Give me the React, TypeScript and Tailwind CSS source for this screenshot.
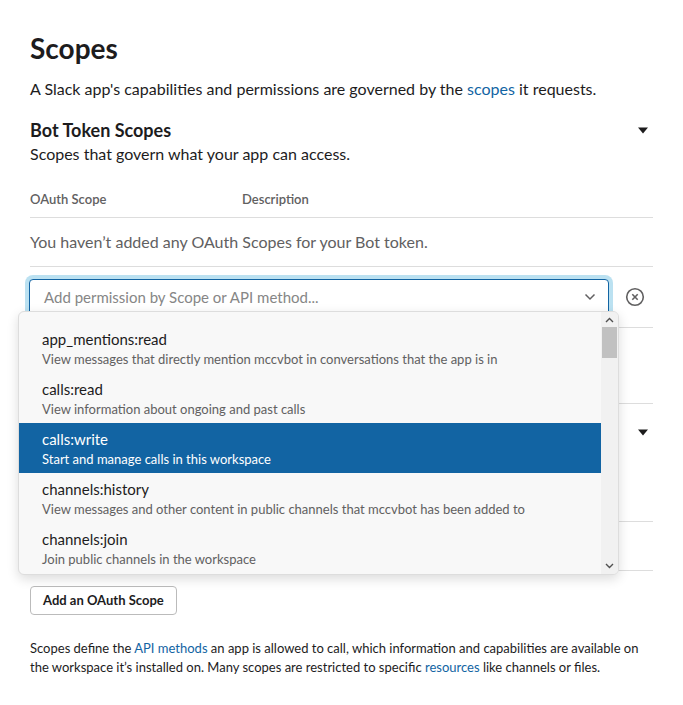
import React from "react";

const OPTIONS = [
  { name: "app_mentions:read", desc: "View messages that directly mention mccvbot in conversations that the app is in" },
  { name: "calls:read", desc: "View information about ongoing and past calls" },
  { name: "calls:write", desc: "Start and manage calls in this workspace", active: true },
  { name: "channels:history", desc: "View messages and other content in public channels that mccvbot has been added to" },
  { name: "channels:join", desc: "Join public channels in the workspace" },
];

function Caret() {
  return (
    <svg width="10" height="7" viewBox="0 0 10 7" className="mr-[5px]">
      <path d="M0 0.5h10L5 6.5z" fill="#1d1c1d" />
    </svg>
  );
}

function TableHead() {
  return (
    <div className="flex border-b border-[#dddddd] pb-[9px] text-[13px] leading-[18px] font-semibold text-[#616061]">
      <div className="w-[212px]">OAuth Scope</div>
      <div>Description</div>
    </div>
  );
}

function AddButton() {
  return (
    <button className="h-[29px] px-[12px] rounded-[4px] border border-[#bbbbbb] bg-white text-[13px] font-bold text-[#1d1c1d]">
      Add an OAuth Scope
    </button>
  );
}

function Dropdown() {
  return (
    <div className="absolute left-[-11px] top-[32px] z-10 w-[601px] h-[264px] rounded-[6px] border border-[#dddddd] bg-[#f8f8f8] shadow-[0_4px_12px_rgba(0,0,0,0.14)] flex overflow-hidden">
      <div className="flex-1 pt-[11px]">
        {OPTIONS.map((o) => (
          <div
            key={o.name}
            className={`h-[50px] pl-[23px] pt-[5px] ${o.active ? "bg-[#1264a3] text-white" : "text-[#1d1c1d]"}`}
          >
            <div className="text-[15px] leading-[22px]">{o.name}</div>
            <div className={`text-[13px] leading-[18px] ${o.active ? "text-white" : "text-[#616061]"}`}>{o.desc}</div>
          </div>
        ))}
      </div>
      <div className="w-[17px] bg-[#f1f1f1] flex flex-col items-center">
        <svg width="9" height="6" viewBox="0 0 9 6" className="mt-[5px]">
          <path d="M1 5L4.5 1.5L8 5" stroke="#505050" strokeWidth="1.4" fill="none" />
        </svg>
        <div className="mt-[4px] w-[15px] h-[31px] bg-[#c1c1c1]" />
        <div className="flex-1" />
        <svg width="9" height="6" viewBox="0 0 9 6" className="mb-[5px]">
          <path d="M1 1L4.5 4.5L8 1" stroke="#505050" strokeWidth="1.4" fill="none" />
        </svg>
      </div>
    </div>
  );
}

export default function App() {
  return (
    <main className="min-h-screen bg-white font-['Lato','Noto_Sans',sans-serif] text-[#1d1c1d]">
      <div className="px-[30px] pt-[28px] pb-[30px]">
        <h1 className="text-[28px] leading-[40px] font-bold">Scopes</h1>
        <p className="mt-[10px] text-[16px] leading-[22px]">
          A Slack app's capabilities and permissions are governed by the{" "}
          <a className="text-[#1264a3]">scopes</a> it requests.
        </p>

        {/* Bot token section */}
        <section className="mt-[18px] border-b border-[#dddddd] pb-[30px]">
          <div className="flex items-center justify-between">
            <h2 className="text-[18px] leading-[24px] font-bold">Bot Token Scopes</h2>
            <Caret />
          </div>
          <p className="mt-[1px] text-[16px] leading-[22px]">Scopes that govern what your app can access.</p>
          <div className="mt-[25px]">
            <TableHead />
            <div className="border-b border-[#dddddd] pt-[13px] pb-[13px] text-[16px] leading-[22px] text-[#616061]">
              You haven’t added any OAuth Scopes for your Bot token.
            </div>
            <div className="flex items-center border-b border-[#dddddd] pt-[12px] pb-[12px]">
              <div className="relative w-[580px] -ml-[1px]">
                <div className="h-[36px] rounded-[4px] border border-[#1264a3] shadow-[0_0_0_4px_rgba(29,155,209,0.3)] bg-white flex items-center pl-[14px] pr-[12px]">
                  <span className="flex-1 text-[15px] text-[#868686]">Add permission by Scope or API method...</span>
                  <svg width="12" height="8" viewBox="0 0 12 8">
                    <path d="M1.5 1.5L6 6L10.5 1.5" stroke="#616061" strokeWidth="1.5" fill="none" />
                  </svg>
                </div>
                <Dropdown />
              </div>
              <svg width="20" height="20" viewBox="0 0 20 20" className="ml-[16px]">
                <circle cx="10" cy="10" r="8.3" stroke="#616061" strokeWidth="1.6" fill="none" />
                <path d="M7.3 7.3L12.7 12.7M12.7 7.3L7.3 12.7" stroke="#616061" strokeWidth="1.6" />
              </svg>
            </div>
            <div className="pt-[16px]">
              <AddButton />
            </div>
          </div>
        </section>

        {/* User token section */}
        <section className="pt-[16px]">
          <div className="flex items-center justify-between">
            <h2 className="text-[18px] leading-[24px] font-bold">User Token Scopes</h2>
            <Caret />
          </div>
          <p className="mt-[1px] text-[16px] leading-[22px]">Scopes that access user data and act on behalf of users that authorize them.</p>
          <div className="mt-[27px]">
            <TableHead />
            <div className="border-b border-[#dddddd] pt-[13px] pb-[13px] text-[16px] leading-[22px] text-[#616061]">
              You haven’t added any OAuth Scopes for your User token.
            </div>
            <div className="pt-[15px]">
              <AddButton />
            </div>
          </div>
        </section>

        <p className="mt-[24px] text-[13px] leading-[19px]">
          Scopes define the <a className="text-[#1264a3]">API methods</a> an app is allowed to call, which information and capabilities are available on the workspace it’s installed on. Many scopes are restricted to specific{" "}
          <a className="text-[#1264a3]">resources</a> like channels or files.
        </p>
      </div>
    </main>
  );
}
